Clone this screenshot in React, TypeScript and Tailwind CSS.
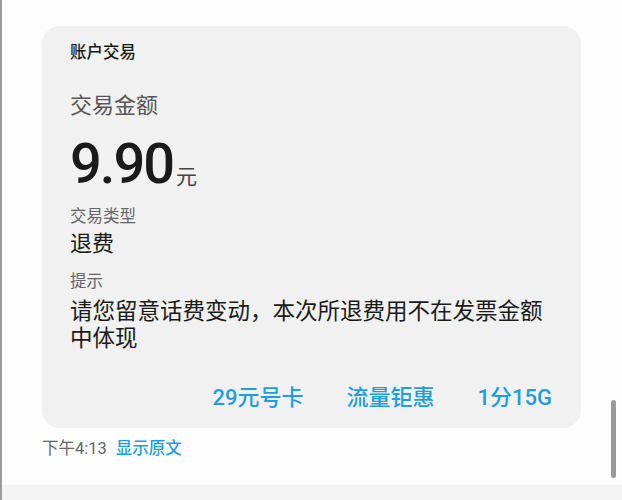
import React from "react";

const font = { fontFamily: '"Roboto", "Noto Sans CJK SC", sans-serif' };

export default function App() {
    const links = ["29元号卡", "流量钜惠", "1分15G"];

    return (
        <div
            className="relative w-[622px] h-[500px] overflow-hidden bg-[#fdfdfd] border-l-2 border-[#9c9c9c] flex flex-col"
            style={font}
        >
            {/* 消息卡片 */}
            <div className="ml-[40px] mt-[26px] w-[539px] rounded-[18px] bg-[#f1f1f1] pt-[17px] pb-[16px] pl-[28px] pr-[29px]">
                <div className="text-[16.5px] leading-[20px] font-medium text-[#1a1a1a]">账户交易</div>

                <div className="mt-[29px] text-[22px] leading-[28px] text-[#555]">交易金额</div>

                <div className="mt-[14px] flex items-end h-[60px]">
                    <span className="text-[56px] leading-[60px] font-medium tracking-[-2px] text-[#1a1a1a]">9.90</span>
                    <span className="ml-[3px] mb-[3px] text-[21px] leading-[28px] text-[#444]">元</span>
                </div>

                <div className="mt-[13px] text-[16.5px] leading-[20px] text-[#666]">交易类型</div>
                <div className="mt-[3px] text-[22px] leading-[28px] text-[#1a1a1a]">退费</div>

                <div className="mt-[14px] text-[16.5px] leading-[20px] text-[#666]">提示</div>
                <div className="mt-[6px] text-[22.5px] leading-[27px] text-[#1a1a1a] w-[480px]">
                    请您留意话费变动，本次所退费用不在发票金额中体现
                </div>

                <div className="mt-[32px] flex justify-end gap-[43px]">
                    {links.map((l) => (
                        <span key={l} className="text-[22px] leading-[28px] font-medium text-[#1e9de0]">
                            {l}
                        </span>
                    ))}
                </div>
            </div>

            {/* 时间 */}
            <div className="ml-[40px] mt-[11px] flex items-center gap-[9px] text-[16.5px] leading-[20px]">
                <span className="text-[#666]">下午4:13</span>
                <span className="font-medium text-[#1e9de0]">显示原文</span>
            </div>

            <div className="mt-auto h-[15px] bg-[#f4f4f4]" />

            {/* 滚动条 */}
            <div className="absolute left-[609px] top-[400px] w-[5px] h-[78px] rounded-full bg-[#9a9a9a]" />
        </div>
    );
}
